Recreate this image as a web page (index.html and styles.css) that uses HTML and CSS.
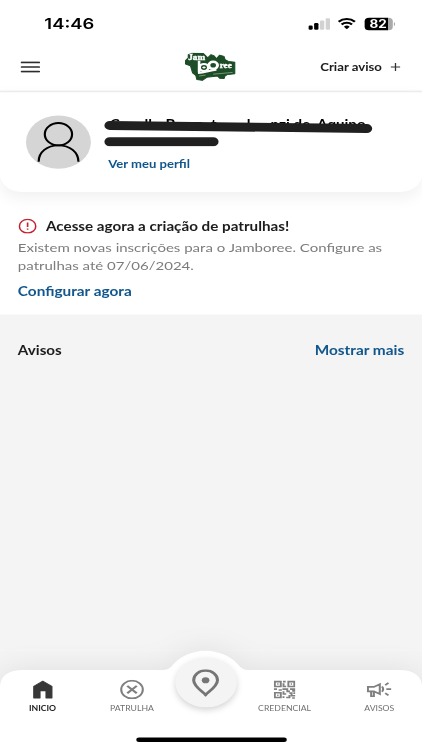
FILE: index.html
```html
<!DOCTYPE html>
<html lang="pt-BR">
<head>
    <meta charset="UTF-8">
    <meta name="viewport" content="width=device-width, initial-scale=1.0">
    <title>Jamboree</title>
    <link rel="stylesheet" href="styles.css">
</head>
<body>

<div class="screen">
<div class="app">
    <div class="statusbar">
        <span class="clock">14:46</span>
        <div class="status-icons">
            <svg width="20" height="14" viewBox="0 0 20 14">
                <rect x="0" y="8.6" width="4" height="5" rx="1.4" fill="#000"/>
                <rect x="5.3" y="6" width="4" height="7.6" rx="1.2" fill="#000"/>
                <rect x="10.7" y="3" width="4" height="10.6" rx="1.2" fill="#d2d2d2"/>
                <rect x="16" y="0.4" width="4" height="13.2" rx="1.2" fill="#d2d2d2"/>
            </svg>
            <svg width="17" height="13" viewBox="0 0 17 13" fill="none" stroke="#000" stroke-width="2.3">
                <path d="M1 4.4a10.8 10.8 0 0 1 15 0"/>
                <path d="M3.7 7.6a6.8 6.8 0 0 1 9.6 0"/>
                <path d="M8.5 12.8L5.8 10.1a3.8 3.8 0 0 1 5.4 0z" fill="#000" stroke="none"/>
            </svg>
            <div class="battery"><span>82</span></div>
        </div>
    </div>

    <header class="topbar">
        <svg class="menu" width="18" height="13" viewBox="0 0 18 13" stroke="#2c2c2c" stroke-width="1.9" stroke-linecap="round">
            <path d="M.9 1.2h16.2M.9 6.4h16.2M.9 11.6h16.2"/>
        </svg>
        <svg class="logo" width="48" height="33" viewBox="0 0 48 33">
            <path d="M4 2.500L7 1 18 1.200 22 6 25 2.500 28 4 30 7 33 3 37 4.500 38 8 41 10 47 11 47 24 40 25 38 26.500 37 29.500 33 29 31 26.500 21 28 17 31.500 12 30.500 11 26 8 23 6 15 1.500 13 1.500 9 4 6Z" fill="#1d4d27" stroke="#1d4d27" stroke-linejoin="round"/>
            <path d="M14 26.500l6-1M27 24.500l18-2" fill="none" stroke="#8ba88c" stroke-width=".8"/>
            <path d="M14 9.500v13M13 23c6 0 11-3 17-3.500" fill="none" stroke="#fff" stroke-width="2.400"/>
            <circle cx="18.500" cy="17" r="4" fill="#1d4d27" stroke="#fff" stroke-width="2.400"/>
            <path d="M18.500 15.500v3M17 17h3" stroke="#fff" stroke-width="1"/>
            <circle cx="27" cy="14.500" r="4" fill="#1d4d27" stroke="#fff" stroke-width="2.800"/>
            <text x="4" y="9" class="logo-text">Jam</text>
            <text x="33" y="17.500" class="logo-text">ree</text>
        </svg>
        <div class="create">
            <span>Criar aviso</span>
            <svg width="9" height="9" viewBox="0 0 9 9" stroke="#333" stroke-width="1.2"><path d="M4.500 0v9M0 4.500h9"/></svg>
        </div>
    </header>

    <section class="profile">
        <div class="avatar">
            <svg width="40" height="46" viewBox="0 0 40 46" fill="none" stroke="#000" stroke-width="2">
                <circle cx="20" cy="14" r="12.600"/>
                <path d="M1.700 45C1.700 34 9.500 26.600 20 26.600S38.500 34 38.500 45"/>
            </svg>
        </div>
        <div class="profile-info">
            <!-- name is crossed out, only bits of it show -->
            <svg class="name" width="250" height="34" viewBox="0 0 250 34">
                <text y="14.600"><tspan x="5.500">C</tspan><tspan x="37.500">ll</tspan><tspan x="57">B</tspan><tspan x="83">g</tspan><tspan x="99">t</tspan><tspan x="132">l</tspan><tspan x="154">nzi de</tspan><tspan x="197">Aquino</tspan></text>
                <path d="M5.500 10.200L243 13.600M5.500 28.500h95.500" fill="none" stroke="#202020" stroke-width="10" stroke-linecap="round"/>
            </svg>
            <a class="link">Ver meu perfil</a>
        </div>
    </section>

    <section class="alert">
        <div class="alert-title">
            <svg width="17" height="17" viewBox="0 0 17 17" fill="none" stroke="#c4222e" stroke-width="1.500">
                <circle cx="8.500" cy="8.500" r="7.600"/>
                <path d="M8.500 4.500v5M8.500 11v1.500"/>
            </svg>
            <h2>Acesse agora a criação de patrulhas!</h2>
        </div>
        <p>Existem novas inscrições para o Jamboree. Configure as patrulhas até 07/06/2024.</p>
        <a class="link">Configurar agora</a>
    </section>

    <main class="notices">
        <h2>Avisos</h2>
        <a class="link">Mostrar mais</a>
    </main>

    <nav class="tabbar">
        <svg class="tabbar-bg" width="390" height="112" viewBox="0 0 390 112">
            <path d="M0 112V42Q0 22 22 22H151Q155 22 158.500 18A37 37 0 0 1 221.500 18Q225 22 229 22H368Q390 22 390 42V112Z" fill="#fff"/>
        </svg>
        <div class="tab active">
            <svg width="20" height="22" viewBox="0 0 20 22"><path d="M10.500 1.500L19 7.500V20.500H13.500V12.500H8V20.500H2.200V7.500Z" fill="#373737" stroke="#373737" stroke-linejoin="round"/></svg>
            <span>INICIO</span>
        </div>
        <div class="tab">
            <svg width="24" height="22" viewBox="0 0 24 22" fill="none" stroke="#808080" stroke-width="1.900"><circle cx="12" cy="11" r="10"/><path d="M7.600 6.800l8.800 8.400M16.400 6.800l-8.800 8.400" stroke-width="2.200"/></svg>
            <span>PATRULHA</span>
        </div>
        <div class="fab">
            <svg width="26" height="31" viewBox="0 0 26 31" fill="none" stroke="#757575" stroke-width="2.800"><path d="M13 29C10 25 2 19.500 2 12.500a11 11 0 0 1 22 0C24 19.500 16 25 13 29Z"/><circle cx="13" cy="12.500" r="3.500" fill="#757575" stroke="none"/></svg>
        </div>
        <div class="tab">
            <svg width="20" height="20" viewBox="0 0 20 20" fill="none" stroke="#808080" stroke-width="1.800">
                <path d="M1 1h5.500v5.500H1zM13.500 1H19v5.500h-5.500zM1 13.500h5.500V19H1z"/>
                <path d="M3.200 3.800h1.200M15.700 3.800h1.200M3.200 16.300h1.200M8.500 1h2.500M9 3v3.500h2.500M8 9.500h4.500V12h2.500M0 9.500h3M4.500 10.500h3M15 9.500h5M17 11.500h3M9 12v3h2.500M9 17.500v2M11.500 19h3v-3M14.500 14h2v3H20M17 19.500h2.500M19 13v2"/>
            </svg>
            <span>CREDENCIAL</span>
        </div>
        <div class="tab">
            <svg width="24" height="20" viewBox="0 0 24 20" fill="none" stroke="#808080" stroke-width="1.900">
                <path d="M1 7H6.500L12 4v11L6.500 12H1zM4 12v5.500H6.500V12M14 6.500q2.200 3 0 6"/>
                <path d="M17 5l3-2.500M18 9.500H22.500M17 14l3 2.500"/>
            </svg>
            <span>AVISOS</span>
        </div>
        <div class="home-indicator"></div>
    </nav>
</div>
</div>

</body>
</html>
```
FILE: styles.css
```css
* {
    box-sizing: border-box;
}

body {
    margin: 0;
    background: #fff;
    font-family: Lato, sans-serif;
    color: #1c1c1c;
}

h2, p {
    margin: 0;
}

svg {
    display: block;
    flex-shrink: 0;
}

.screen {
    width: 422px;
    height: 750px;
    overflow: hidden;
}

.app {
    width: 390px;
    height: 844px;
    display: flex;
    flex-direction: column;
    transform: scale(1.08205, 0.88863);
    transform-origin: 0 0;
}

.statusbar {
    height: 52px;
    display: flex;
    justify-content: space-between;
    align-items: center;
    padding: 1px 25px 0 41px;
}

.clock {
    font-family: Inter, sans-serif;
    font-size: 17px;
    font-weight: 600;
    color: #000;
}

.status-icons {
    display: flex;
    align-items: center;
    gap: 7.5px;
}

.battery {
    width: 26px;
    height: 14px;
    margin-right: 2.5px;
    border-radius: 4px;
    background: linear-gradient(to right, #000 82%, #aaa 82%);
    color: #fff;
    font: bold 12.5px/14px Inter, sans-serif;
    text-align: center;
    position: relative;
}

.battery::after {
    content: "";
    position: absolute;
    right: -2.5px;
    top: 5px;
    width: 1.5px;
    height: 4px;
    border-radius: 0 2px 2px 0;
    background: #aaa;
}

.topbar {
    height: 52px;
    display: grid;
    grid-template-columns: 1fr 48px 1fr;
    align-items: center;
    padding: 0 20px 4px 19px;
    border-bottom: 2px solid #eee;
}

.logo {
    margin-left: -0.5px;
}

.logo-text {
    font: bold 8.5px "Liberation Serif", serif;
    fill: #fff;
    stroke: #fff;
    stroke-width: .4px;
}

.create {
    display: flex;
    justify-content: flex-end;
    align-items: center;
    gap: 8px;
    font-size: 12.2px;
    font-weight: bold;
}

.profile {
    height: 112px;
    display: flex;
    padding: 26px 24px 0;
    gap: 12px;
    background: #fff;
    border-radius: 0 0 20px 20px;
    box-shadow: 0 6px 16px rgba(0, 0, 0, 0.06);
}

.avatar {
    width: 60px;
    height: 60px;
    flex-shrink: 0;
    display: flex;
    justify-content: center;
    align-items: center;
    border-radius: 50%;
    background: #d5d5d5;
}

.profile-info .link {
    display: block;
    margin: 12px 0 0 4px;
    font-size: 12.1px;
    line-height: 16px;
}

.name {
    margin-top: 1px;
    font: bold 14px Lato, sans-serif;
}

.link {
    color: #11568c;
    font-size: 14.2px;
    font-weight: bold;
}

.alert {
    height: 138px;
    padding: 29px 16px 0 16.5px;
}

.alert-title {
    display: flex;
    align-items: center;
    gap: 9px;
    height: 20px;
}

.alert-title svg {
    margin-top: -1px;
}

.alert h2, .notices h2 {
    font-size: 14.05px;
    line-height: 20px;
}

.alert p {
    margin-top: 4px;
    font-size: 13.88px;
    line-height: 20px;
    color: #7c7c7c;
}

.alert .link {
    display: block;
    margin-top: 9px;
    line-height: 20px;
}

.notices {
    flex: 1;
    display: flex;
    justify-content: space-between;
    padding: 31px 16.5px 0;
    background: #f4f4f4;
    line-height: 20px;
}

.tabbar {
    height: 112px;
    display: grid;
    grid-template-columns: 78.5px 87px 49.5px 96px 79px;
    position: relative;
    background: #f4f4f4;
}

.tabbar-bg {
    position: absolute;
    left: 0;
    top: 0;
    overflow: visible;
    filter: drop-shadow(0 -4px 14px rgba(0, 0, 0, 0.07));
}

.tab {
    position: relative;
    display: flex;
    flex-direction: column;
    align-items: center;
    padding-top: 33px;
    font-size: 8px;
    line-height: 10px;
    color: #707070;
}

.tab svg {
    height: 22px;
    margin-bottom: 5px;
}

.tab.active {
    color: #222;
    font-weight: bold;
}

.fab {
    position: relative;
    width: 56.5px;
    height: 56px;
    margin: 8px 0 0 -3.5px;
    display: flex;
    justify-content: center;
    align-items: center;
    border-radius: 50%;
    background: #f4f4f4;
    box-shadow: 0 3px 6px rgba(0, 0, 0, 0.17);
}

.home-indicator {
    position: absolute;
    left: 126px;
    bottom: 9px;
    width: 139px;
    height: 5px;
    border-radius: 3px;
    background: #000;
}
```
